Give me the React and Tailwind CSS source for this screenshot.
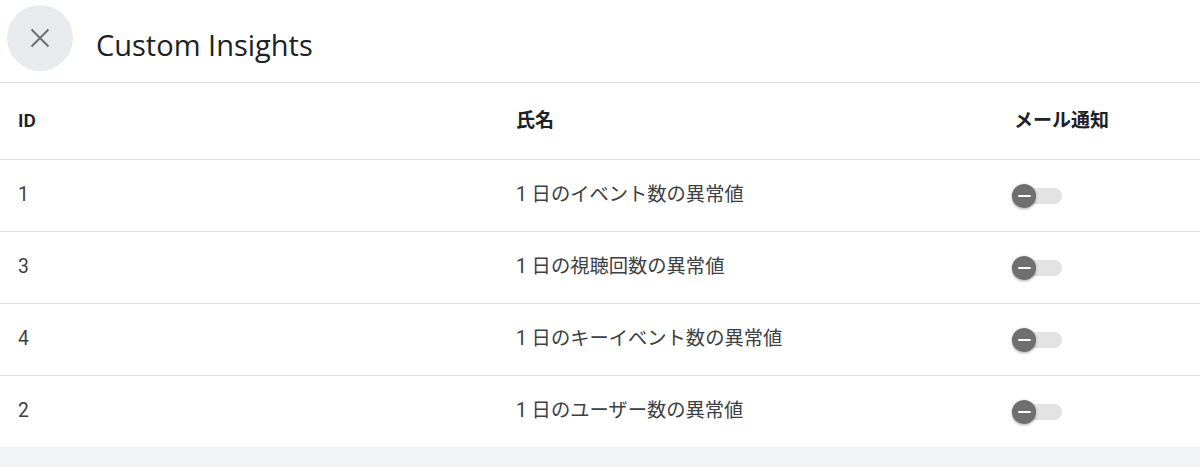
import React from 'react';

const rows = [
  { id: '1', name: '1 日のイベント数の異常値' },
  { id: '3', name: '1 日の視聴回数の異常値' },
  { id: '4', name: '1 日のキーイベント数の異常値' },
  { id: '2', name: '1 日のユーザー数の異常値' },
];

const Toggle = () => (
  <div className="relative w-[50px] h-[24px] flex items-center">
    <div className="absolute left-[4px] right-0 h-[16px] rounded-full bg-[#e3e3e3]" />
    <div className="relative w-[24px] h-[24px] rounded-full bg-[#6f6f6f] shadow-[0_1px_3px_rgba(0,0,0,0.35)] flex items-center justify-center">
      <div className="w-[13px] h-[2px] bg-white rounded-sm" />
    </div>
  </div>
);

const App = () => {
  const font = { fontFamily: 'Roboto, "Noto Sans CJK JP", sans-serif' };
  return (
    <div className="w-[1200px] h-[467px] bg-[#f1f3f4] flex flex-col" style={font}>
      <div className="bg-white h-[83px] border-b border-[#e0e0e0] flex items-start pl-[7px] pt-[5px]">
        <button className="w-[66px] h-[66px] rounded-full bg-[#e8eaed] flex items-center justify-center text-[#6b6f73]">
          <svg width="24" height="24" viewBox="0 0 24 24" fill="none" stroke="currentColor" strokeWidth="2" strokeLinecap="butt">
            <path d="M3.5 3.5l17 17M20.5 3.5l-17 17" />
          </svg>
        </button>
        <h1 className="ml-[23px] mt-[23px] text-[29px] leading-[34px] text-[#202124]" style={{ fontFamily: '"Open Sans", sans-serif' }}>
          Custom Insights
        </h1>
      </div>
      <div className="bg-white">
        <div className="h-[77px] border-b border-[#e0e0e0] flex items-center text-[19px] font-semibold text-[#202124]">
          <div className="w-[516px] pl-[18px]">ID</div>
          <div className="w-[498px]">氏名</div>
          <div>メール通知</div>
        </div>
        {rows.map((r, i) => (
          <div
            key={r.id}
            className={`flex items-center text-[19.3px] text-[#3c4043] ${i < rows.length - 1 ? 'h-[72px] border-b border-[#e0e0e0]' : 'h-[71px]'}`}
          >
            <div className="w-[516px] pl-[18px]">{r.id}</div>
            <div className="w-[496px]">{r.name}</div>
            <Toggle />
          </div>
        ))}
      </div>
    </div>
  );
};

export default App;
